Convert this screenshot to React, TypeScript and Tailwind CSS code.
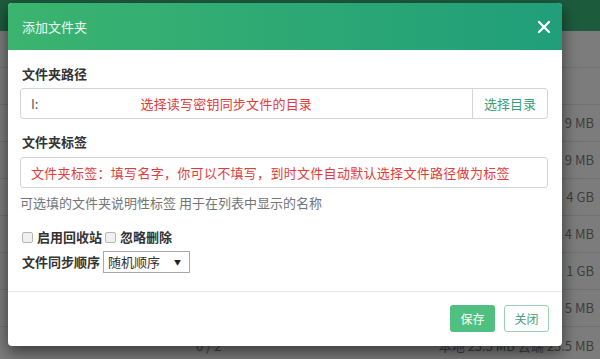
import React from "react";

const rows = ["", "", "9 MB", "9 MB", "4 GB", "4 MB", "1 GB", "5 MB"];

function Backdrop() {
  return (
    <div className="absolute inset-0 flex flex-col bg-[#7c7c7c]">
      <div className="h-[31px] bg-[#1d5b3d] shrink-0" />
      {rows.map((r, i) => (
        <div
          key={i}
          className="h-[37px] shrink-0 border-b border-[#717171] flex items-center justify-end pr-[6px] text-[13px] text-[#3e3e3e]"
        >
          {r}
        </div>
      ))}
      <div className="h-[37px] shrink-0 flex items-center text-[13px] text-[#3e3e3e]">
        <span className="ml-[196px]">0 / 2</span>
        <span className="ml-auto pr-[6px]">本地 23.5 MB 云端 23.5 MB</span>
      </div>
    </div>
  );
}

function Checkbox({ label }: { label: string }) {
  return (
    <label className="flex items-center gap-[4px]">
      <span className="w-[11px] h-[11px] rounded-[2px] border border-[#b5b5b5] bg-[#f0f0f0]" />
      <span className="font-bold text-[#333]">{label}</span>
    </label>
  );
}

export default function App() {
  return (
    <div
      className="relative w-[600px] h-[359px] overflow-hidden"
      style={{ fontFamily: '"Noto Sans CJK SC", "Noto Sans", sans-serif' }}
    >
      <Backdrop />
      <div className="absolute left-[8px] top-[3px] w-[554px] bg-white rounded-[4px] overflow-hidden shadow-[0_6px_16px_rgba(0,0,0,0.55)] text-[13px] text-[#333]">
        <div className="h-[47px] pl-[14px] pr-[11px] flex items-center justify-between bg-gradient-to-r from-[#3bb46f] to-[#1f9e79] text-white">
          <span className="text-[13px] text-white/90">添加文件夹</span>
          <svg width="14" height="14" viewBox="0 0 14 14">
            <path d="M2 2 L12 12 M12 2 L2 12" stroke="white" strokeWidth="2.4" strokeLinecap="round" />
          </svg>
        </div>

        <div className="pl-[12px] pr-[14px] pt-[15px] pb-[18px] flex flex-col">
          <div className="h-[18px] leading-[18px] font-bold pl-[2px] mb-[5px]">文件夹路径</div>
          <div className="flex h-[31px] border border-[#d4d4d4] rounded-[3px]">
            <div className="flex-1 flex items-center pl-[10px] text-[#555]">
              <span>I:</span>
              <span className="ml-[102px] text-[#e23b3b] tracking-[0.2px]">选择读写密钥同步文件的目录</span>
            </div>
            <div className="w-[75px] flex items-center justify-center border-l border-[#d4d4d4] text-[#3a9e7a]">
              选择目录
            </div>
          </div>

          <div className="h-[18px] leading-[18px] font-bold pl-[2px] mt-[14px] mb-[6px]">文件夹标签</div>
          <div className="h-[31px] border border-[#d4d4d4] rounded-[3px] flex items-center pl-[10px] text-[#e23b3b] tracking-[0.3px]">
            文件夹标签：填写名字，你可以不填写，到时文件自动默认选择文件路径做为标签
          </div>
          <div className="h-[18px] leading-[18px] mt-[6px] text-[#747474]">
            可选填的文件夹说明性标签 用于在列表中显示的名称
          </div>

          <div className="h-[18px] mt-[16px] flex items-center gap-[3px] pl-[2px]">
            <Checkbox label="启用回收站" />
            <Checkbox label="忽略删除" />
          </div>
          <div className="mt-[5px] flex items-center gap-[3px] pl-[2px]">
            <span className="font-bold">文件同步顺序</span>
            <div className="w-[87px] h-[22px] border border-[#a9a9a9] flex items-center justify-between pl-[4px] pr-[8px]">
              <span>随机顺序</span>
              <span className="text-[7px] text-[#222]">▼</span>
            </div>
          </div>
        </div>

        <div className="border-t border-[#e8e8e8] pt-[13px] pb-[14px] pr-[13px] flex justify-end gap-[9px]">
          <button className="w-[45px] h-[27px] rounded-[3px] bg-[#50c080] text-white text-[12px]">保存</button>
          <button className="w-[45px] h-[27px] rounded-[3px] bg-white border border-[#9ccfb3] text-[#4a9a7a] text-[12px]">
            关闭
          </button>
        </div>
      </div>
    </div>
  );
}
